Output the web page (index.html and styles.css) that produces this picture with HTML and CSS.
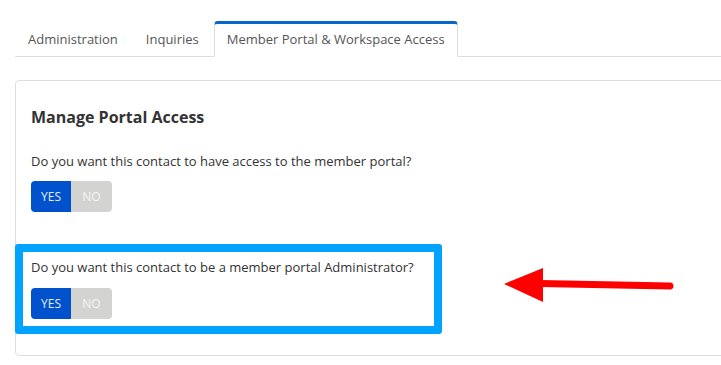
FILE: index.html
```html
<!DOCTYPE html>
<html lang="en">
<head>
  <meta charset="UTF-8" />
  <title>Member Portal &amp; Workspace Access</title>
  <link rel="stylesheet" href="styles.css">
</head>
<body>
  <div class="page">
    <ul class="tabs">
      <li class="tab">Administration</li>
      <li class="tab">Inquiries</li>
      <li class="tab active">Member Portal &amp; Workspace Access</li>
    </ul>

    <div class="card">
      <h2>Manage Portal Access</h2>

      <div class="question">
        <p>Do you want this contact to have access to the member portal?</p>
        <div class="toggle">
          <span class="yes">YES</span>
          <span class="no">NO</span>
        </div>
      </div>

      <div class="question highlight">
        <p>Do you want this contact to be a member portal Administrator?</p>
        <div class="toggle">
          <span class="yes">YES</span>
          <span class="no">NO</span>
        </div>
      </div>
    </div>

    <svg class="arrow" width="180" height="50" viewBox="0 0 180 50">
      <line x1="40" y1="23.5" x2="170" y2="26" stroke="#ff0000" stroke-width="7" stroke-linecap="round"/>
      <polygon points="4,24 43,8 43,42" fill="#ff0000"/>
    </svg>
  </div>
</body>
</html>
```

FILE: styles.css
```css
body {
  margin: 0;
  font-family: 'Open Sans', sans-serif;
  color: #333;
  background: #fff;
}
.page {
  position: relative;
  padding: 21px 0 0 15px;
  overflow: hidden;
  height: 344px;
}
.tabs {
  list-style: none;
  margin: 0;
  padding: 0;
  display: flex;
  border-bottom: 1px solid #ddd;
  height: 35px;
}
.tab {
  font-size: 13px;
  color: #555;
  padding: 0 12px;
  margin-right: 2px;
  border: 1px solid transparent;
  border-top-width: 3px;
  box-sizing: border-box;
  height: 36px;
  line-height: 30px;
}
.tab.active {
  background: #fff;
  border-color: #ddd;
  border-top-color: #0568c9;
  border-bottom-color: #fff;
  border-radius: 4px 4px 0 0;
}
.card {
  margin-top: 23px;
  width: 720px;
  border: 1px solid #ddd;
  border-radius: 4px;
  padding: 25px 15px 21px;
  box-sizing: border-box;
}
h2 {
  margin: 0;
  font-size: 16px;
  font-weight: 700;
  line-height: 22px;
  color: #333;
}
.question p {
  margin: 0;
  font-size: 13px;
  line-height: 18px;
  color: #333;
}
.question:first-of-type {
  margin-top: 24px;
}
.toggle {
  display: flex;
  margin-top: 11px;
  width: 81px;
  height: 31px;
  border-radius: 4px;
  overflow: hidden;
  font-size: 12px;
  line-height: 31px;
  text-align: center;
}
.toggle .yes {
  width: 40px;
  background: #0052cc;
  color: #e6ecf7;
}
.toggle .no {
  width: 41px;
  background: #d3d4d2;
  color: #f4f4f4;
}
.highlight {
  margin: 32px 0 0 -16px;
  width: 427px;
  box-sizing: border-box;
  border: 8px solid #00a3ff;
  border-radius: 3px;
  padding: 6px 8px 7px;
}
.highlight .toggle {
  margin-top: 12px;
}
.arrow {
  position: absolute;
  left: 500px;
  top: 260px;
}
```
